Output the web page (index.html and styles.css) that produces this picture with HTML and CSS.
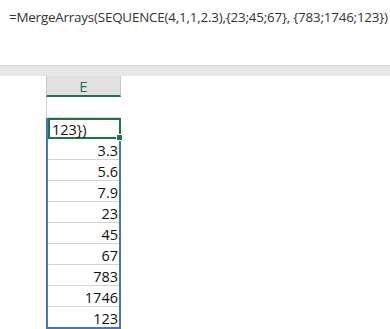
FILE: index.html
```html
<!doctype html>
<html lang="en">
  <head>
    <meta charset="UTF-8" />
    <title>MergeArrays</title>
    <link rel="stylesheet" href="styles.css">
  </head>
  <body>
    <div class="formula-bar">=MergeArrays(SEQUENCE(4,1,1,2.3),{23;45;67}, {783;1746;123})</div>
    <div class="band"></div>

    <div class="sheet">
      <div class="col-head">E</div>
      <div class="cell"></div>
      <div class="spill">
        <div class="cell active">123})<span class="handle"></span></div>
        <div class="cell num">3.3</div>
        <div class="cell num">5.6</div>
        <div class="cell num">7.9</div>
        <div class="cell num">23</div>
        <div class="cell num">45</div>
        <div class="cell num">67</div>
        <div class="cell num">783</div>
        <div class="cell num">1746</div>
        <div class="cell num last">123</div>
      </div>
    </div>
  </body>
</html>
```

FILE: styles.css
```css
body {
  margin: 0;
  width: 390px;
  height: 329px;
  overflow: hidden;
  background-color: white;
  font-family: "Open Sans", "Noto Sans", sans-serif;
  color: #222;
}

.formula-bar {
  height: 65px;
  box-sizing: border-box;
  padding: 8px 0 0 9px;
  font-size: 13.4px;
  letter-spacing: -0.2px;
  white-space: nowrap;
  color: #333;
}

.band {
  height: 10px;
  background-color: #e6e6e6;
  border-top: 1px solid #cfcfcf;
}

.sheet {
  margin-left: 47px;
  width: 74px;
}

.col-head {
  height: 19px;
  background-color: #e1e1e1;
  border-left: 1px solid #c8c8c8;
  border-right: 1px solid #c8c8c8;
  border-bottom: 2px solid #217346;
  text-align: center;
  font-size: 15px;
  line-height: 21px;
  color: #217346;
  box-sizing: content-box;
  margin-left: -1px;
}

.cell {
  position: relative;
  height: 20px;
  border-bottom: 1px solid #d4d4d4;
  border-left: 1px solid #d4d4d4;
  margin-left: -1px;
  font-family: "Open Sans", sans-serif;
  font-size: 14.5px;
  line-height: 23px;
  padding: 0 3px;
  color: #111;
}

.spill {
  border-left: 2px solid #4a72c0;
  border-right: 2px solid #4a72c0;
  border-bottom: 2px solid #4a72c0;
  margin-left: -1px;
}

.spill .cell {
  border-left: none;
  margin-left: 0;
}

.spill .cell.last {
  border-bottom: none;
}

.num {
  text-align: right;
  padding-right: 1px;
}

.active {
  height: 17px;
  border: 2px solid #217346;
  margin: 0 -2px;
  padding: 0 2px;
  line-height: 19px;
}

.spill .cell.active {
  border-left: 2px solid #217346;
}

.handle {
  position: absolute;
  right: -4px;
  bottom: -4px;
  width: 5px;
  height: 5px;
  background-color: #217346;
  border: 1px solid white;
}
```
